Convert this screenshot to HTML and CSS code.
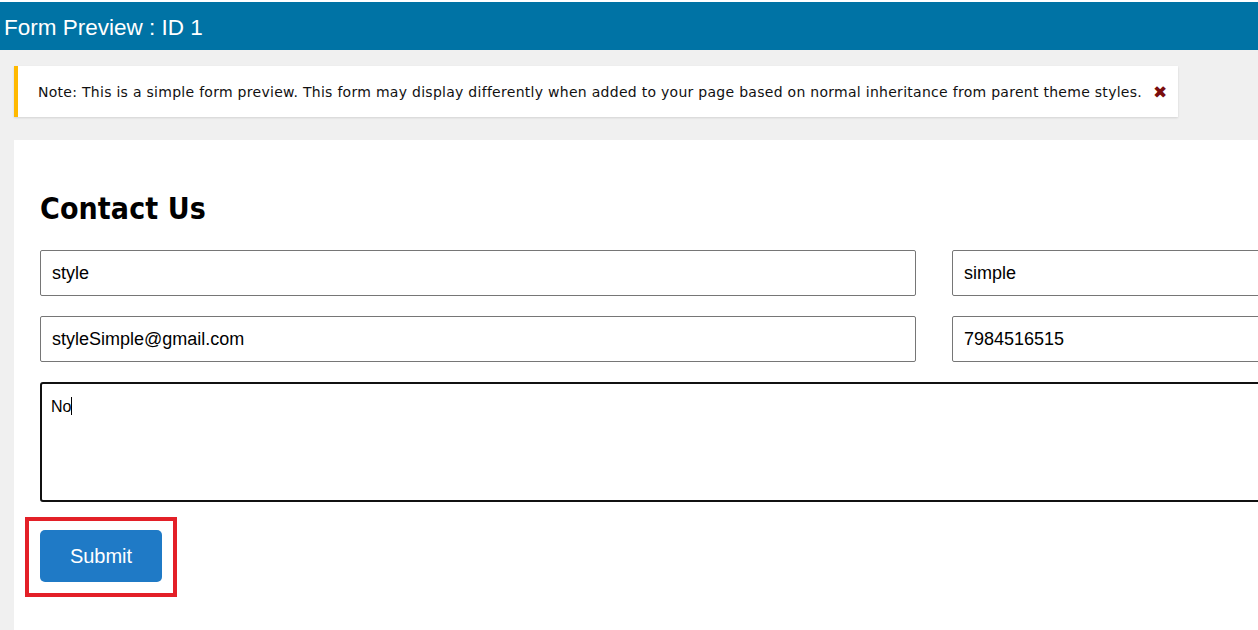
FILE: index.html
```html
<!DOCTYPE html>
<html lang="en">
  <head>
    <title>Form Preview : ID 1</title>
    <meta charset="UTF-8">
    <link rel="stylesheet" href="styles.css">
  </head>
  <body>
    <div class="topbar">Form Preview : ID 1</div>

    <div class="notice">
      <span class="notice-text">Note: This is a simple form preview. This form may display differently when added to your page based on normal inheritance from parent theme styles.</span>
      <span class="notice-close">&#10006;</span>
    </div>

    <div class="form-pane">
      <h2>Contact Us</h2>
      <form action="" name="contactForm">
        <div class="field-grid">
          <input type="text" name="firstName" value="style">
          <input type="text" name="lastName" value="simple">
          <input type="text" name="email" value="styleSimple@gmail.com">
          <input type="text" name="phone" value="7984516515">
        </div>
        <div class="message-box">No<span class="caret"></span></div>
        <div class="highlight">
          <input type="button" class="button" value="Submit">
        </div>
      </form>
    </div>
  </body>
</html>
```

FILE: styles.css
```css
html, body {
	margin: 0;
	padding: 0;
}
body {
	background-color: #f0f0f0;
	font-family: "Liberation Sans", Arial, sans-serif;
	overflow: hidden;
	border-top: 2px solid #fff;
}
.topbar {
	background-color: #0073a5;
	color: #fff;
	font-size: 22.5px;
	height: 48px;
	line-height: 51px;
	padding-left: 4px;
}
.notice {
	display: flex;
	align-items: center;
	width: 1140px;
	height: 51px;
	margin: 16px 0 0 14px;
	padding: 0 0 0 20px;
	background-color: #fff;
	border-left: 4px solid #ffb900;
	box-shadow: 0 1px 2px rgba(0, 0, 0, 0.12);
	font-family: "DejaVu Sans", Verdana, sans-serif;
	font-size: 14px;
	letter-spacing: 0.28px;
	color: #111;
}
.notice-text {
	padding-top: 1px;
}
.notice-close {
	color: #7a0d0d;
	font-size: 17px;
	margin-left: 11px;
	font-weight: bold;
}
.form-pane {
	background-color: #fff;
	margin: 23px 0 0 14px;
	padding: 26px 0 40px 26px;
	min-height: 500px;
}
h2 {
	font-family: "DejaVu Sans Condensed", "DejaVu Sans", sans-serif;
	font-size: 30px;
	font-weight: bold;
	margin: 25px 0 24px 0;
	color: #000;
	letter-spacing: 0.1px;
}
.field-grid {
	display: grid;
	grid-template-columns: 876px 876px;
	column-gap: 36px;
	row-gap: 20px;
}
input[type=text] {
	height: 46px;
	box-sizing: border-box;
	border: 1px solid #767676;
	border-radius: 2px;
	padding: 0 11px;
	font-family: "Liberation Sans", Arial, sans-serif;
	font-size: 18px;
	color: #000;
}
.message-box {
	box-sizing: border-box;
	width: 1788px;
	height: 120px;
	margin-top: 20px;
	border: 2px solid #111;
	border-radius: 3px;
	padding: 13px 9px;
	font-size: 16px;
	line-height: 19px;
}
.caret {
	display: inline-block;
	width: 1px;
	height: 18px;
	background-color: #000;
	vertical-align: -3px;
}
.highlight {
	display: inline-block;
	margin: 15px 0 0 -15px;
	padding: 9px 11px 11px 11px;
	border: 4px solid #e32028;
}
.button {
	display: block;
	width: 122px;
	height: 52px;
	background-color: #1f7ac6;
	border: none;
	border-radius: 5px;
	color: #fff;
	font-family: "Liberation Sans", Arial, sans-serif;
	font-size: 20px;
}
```
